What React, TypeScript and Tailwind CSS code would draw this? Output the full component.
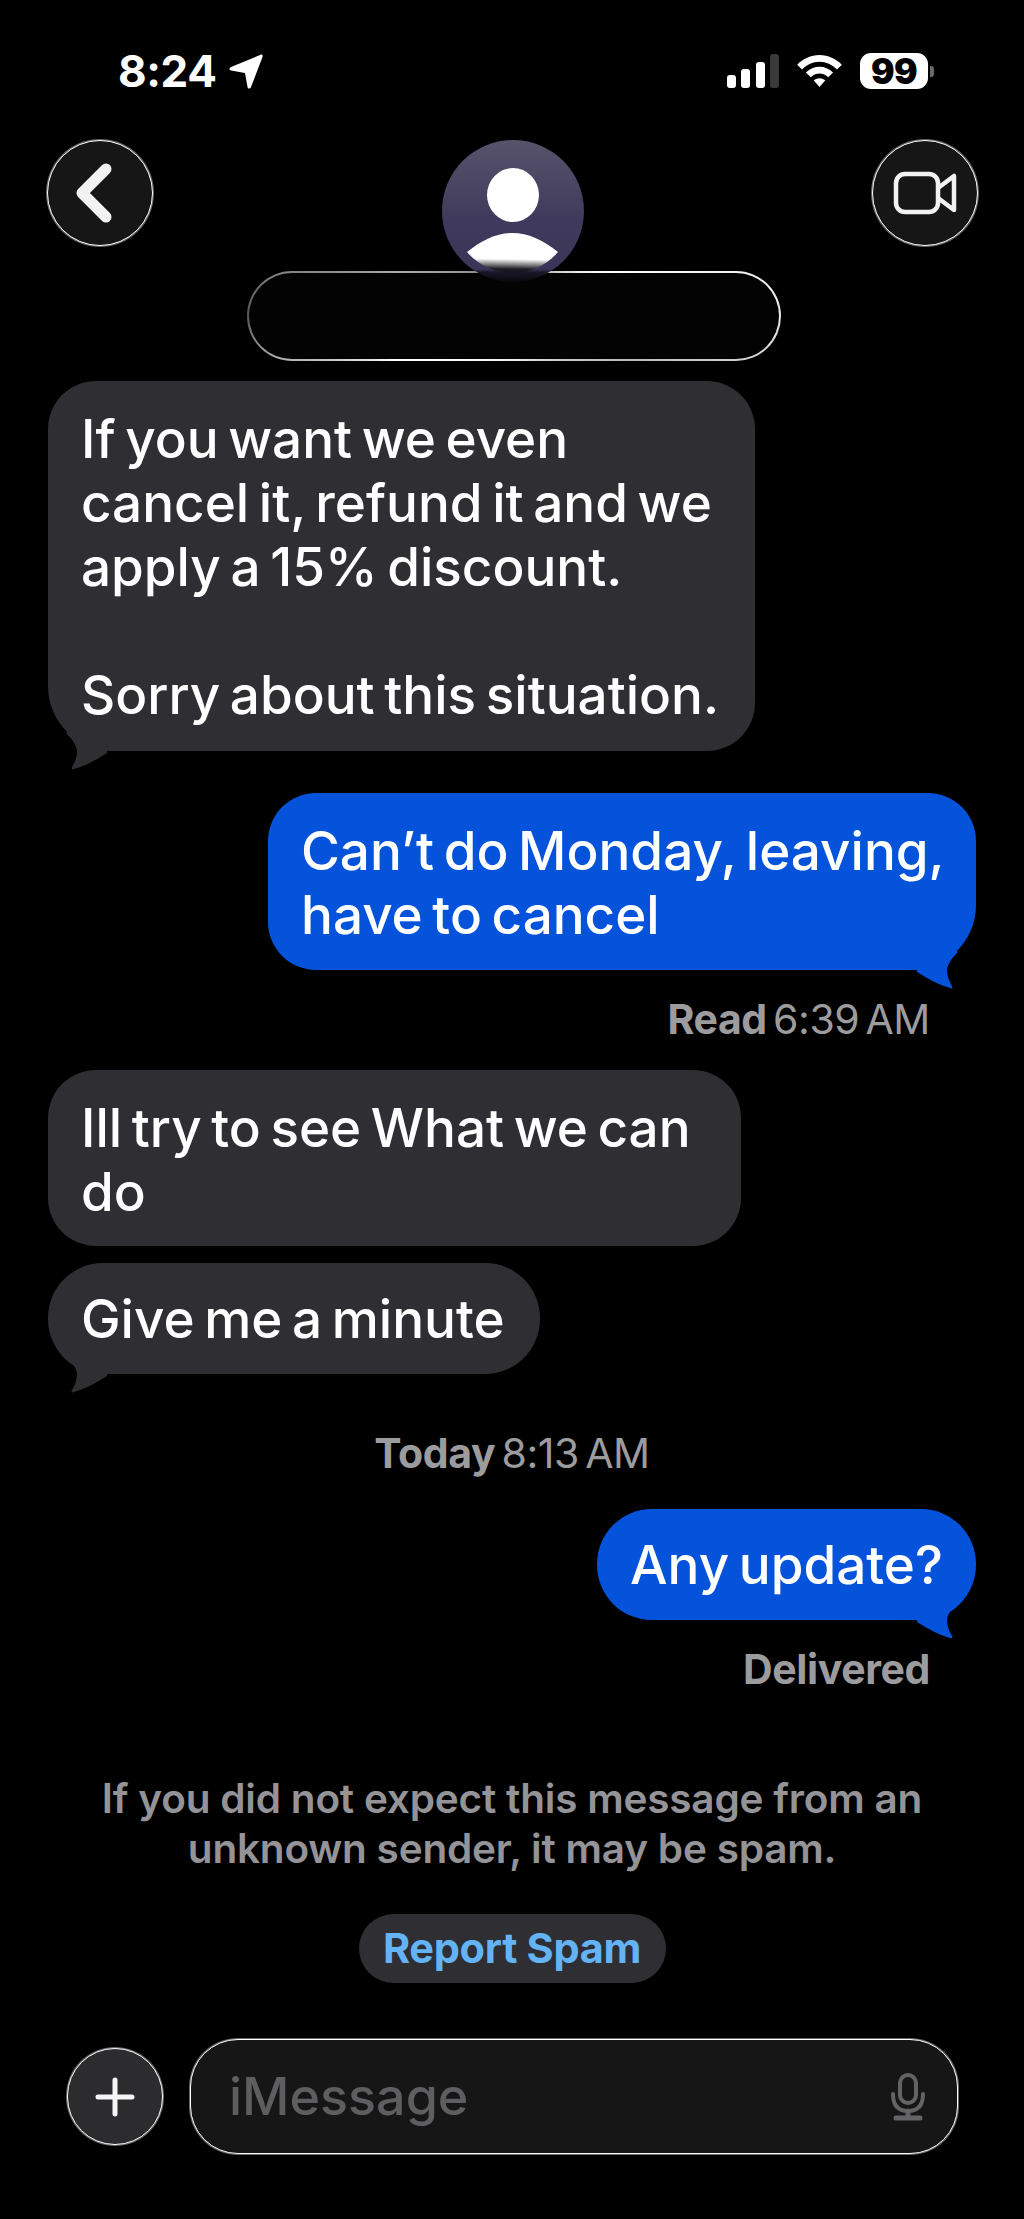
import React from "react";

const font = "[font-family:Inter,'Liberation_Sans',sans-serif]";

function Tail({ side }: { side: "l" | "r" }) {
  return (
    <svg
      className={`absolute bottom-[-20px] ${side === "l" ? "left-0" : "right-0 -scale-x-100"}`}
      width="80"
      height="64"
      viewBox="0 0 80 64"
      fill={side === "l" ? "#2f2f33" : "#0453da"}
    >
      <path d="M18 26 C22 30 29 38 29 44 C29 50 27 55 24 60 C23 62 24 63 26 62 C37 59 48 53 59 46 L59 44 L80 40 L40 10 Z" />
    </svg>
  );
}

function Bubble({ side, tail, className, children }: { side: "l" | "r"; tail?: boolean; className: string; children: React.ReactNode }) {
  return (
    <div className={`relative px-[33px] text-[53px] leading-[64px] font-medium text-white [word-spacing:-4.5px] ${side === "l" ? "bg-[#2f2f33]" : "bg-[#0453da]"} ${className}`}>
      {tail && <Tail side={side} />}
      <span className="relative whitespace-nowrap">{children}</span>
    </div>
  );
}

function Meta({ strong, rest }: { strong: string; rest?: string }) {
  return (
    <span className="text-[41px] leading-[44px] text-[#9c9c9f] tracking-[-0.4px] whitespace-nowrap">
      <span className="font-bold text-[41px]">{strong}</span>
      {rest && <span className="font-normal [word-spacing:-5px]"> {rest}</span>}
    </span>
  );
}

export default function App() {
  return (
    <div className={`w-[1024px] h-[2219px] bg-black overflow-hidden flex flex-col text-white ${font}`}>
      {/* Status bar */}
      <div className="flex items-center justify-between h-[46px] mt-[48px] pl-[118px] pr-[90px]">
        <div className="flex items-center gap-[12px]">
          <span className="text-[44px] leading-[46px] font-bold tracking-[-0.4px]">8:24</span>
          <svg width="34" height="35" viewBox="0 0 34 35" fill="white">
            <path d="M31 1 C33 0 34 1 33.5 3 L22 33 C21 35 19 35 18.500 33 L16 19 L2 16.500 C0 16 0 14 2 13 Z" />
          </svg>
        </div>
        <div className="flex items-center">
          <svg width="52" height="34" viewBox="0 0 52 34" className="mr-[18px]">
            <rect x="0" y="21" width="9" height="13" rx="3" fill="white" />
            <rect x="14" y="15" width="9" height="19" rx="3" fill="white" />
            <rect x="29" y="8" width="9" height="26" rx="3" fill="white" />
            <rect x="43" y="0" width="9" height="34" rx="3" fill="#3a3a3c" />
          </svg>
          <svg width="45" height="33" viewBox="0 0 46 34" fill="white" className="mr-[18px]">
            <path d="M23 0 C32 0 40 4 46 10 L41 15 C36 10 30 7 23 7 C16 7 10 10 5 15 L0 10 C6 4 14 0 23 0 Z" />
            <path d="M23 12 C28 12 33 14 37 18 L32 23 C29 20 26 19 23 19 C20 19 17 20 14 23 L9 18 C13 14 18 12 23 12 Z" />
            <path d="M23 24 C25 24 27 25 29 26 L23 33 L17 26 C19 25 21 24 23 24 Z" />
          </svg>
          <div className="w-[68px] h-[36px] rounded-[11px] bg-white flex items-center justify-center">
            <span className="text-[35px] leading-[36px] font-black text-black tracking-[-0.5px]">99</span>
          </div>
          <div className="w-[4px] h-[11px] ml-[2px] rounded-r-[3px] bg-[#6a6a6c]" />
        </div>
      </div>

      {/* Nav */}
      <div className="flex justify-between items-start mt-[46px] pl-[47px] pr-[46px] h-[141px]">
        <div className="w-[106px] h-[106px] rounded-full border border-white shadow-[0_0_0_1px_rgba(255,255,255,0.4)] bg-[#161616] flex items-center justify-center">
          <svg width="38" height="60" viewBox="0 0 38 60" fill="none" stroke="#f2f2f2" strokeWidth="11" strokeLinecap="round" strokeLinejoin="round" className="mr-[12px]">
            <path d="M31 6 L7 30 L31 54" />
          </svg>
        </div>
        <div className="relative z-10 w-[142px] h-[142px] rounded-full bg-[linear-gradient(to_bottom,#57536b_0%,#403b5c_55%,#3a3558_91%,#1a1828_93%,#08070c_100%)] flex items-center justify-center">
          <svg width="142" height="142" viewBox="0 0 142 142">
            <defs>
              <linearGradient id="body" x1="0.52" y1="0" x2="0.48" y2="1">
                <stop offset="0.65" stopColor="#ffffff" />
                <stop offset="0.78" stopColor="#8a8a8a" />
                <stop offset="0.9" stopColor="#1d1c24" />
                <stop offset="1" stopColor="#15141c" />
              </linearGradient>
            </defs>
            <ellipse cx="71" cy="55" rx="26" ry="27" fill="#ffffff" />
            <path d="M25 112 C40 100 55 93 70.500 93 C86 93 101 100 116 112 C105 125 88 133 70.500 133 C53 133 36 125 25 112 Z" fill="url(#body)" />
          </svg>
        </div>
        <div className="w-[106px] h-[106px] rounded-full border border-white shadow-[0_0_0_1px_rgba(255,255,255,0.4)] bg-[#161616] flex items-center justify-center">
          <svg width="64" height="44" viewBox="0 0 64 44" fill="none" stroke="#f2f2f2" strokeWidth="4.5" strokeLinejoin="round">
            <rect x="3" y="3" width="42" height="38" rx="9" />
            <path d="M45 17 L61 5 V39 L45 27" />
          </svg>
        </div>
      </div>

      {/* Name pill (redacted) */}
      <div className="self-center w-[534px] h-[90px] mt-[-10px] ml-[4px] rounded-[45px] border-2 border-transparent [background:linear-gradient(#030303,#030303)_padding-box,conic-gradient(#666_0deg,#fff_65deg,#e8e8e8_90deg,#bbb_110deg,#eee_180deg,#fff_250deg,#555_270deg,#aaa_290deg,#666_360deg)_border-box]" />

      {/* Conversation */}
      <div className="flex flex-col px-[48px] mt-[20px]">
        <Bubble side="l" tail className="self-start w-[707px] h-[370px] pt-[26px] rounded-[48px] rounded-bl-[65px]">
          If you want we even<br />cancel it, refund it and we<br />apply a 15% discount.<br /><br />Sorry about this situation.
        </Bubble>
        <Bubble side="r" tail className="self-end w-[708px] h-[177px] pt-[26px] mt-[42px] rounded-[48px] rounded-br-[65px]">
          Can’t do Monday, leaving,<br />have to cancel
        </Bubble>
        <div className="self-end mt-[27px] mr-[46px] flex h-[44px]">
          <Meta strong="Read" rest="6:39 AM" />
        </div>
        <Bubble side="l" className="self-start w-[693px] h-[176px] pt-[26px] mt-[29px] rounded-[48px]">
          Ill try to see What we can<br />do
        </Bubble>
        <Bubble side="l" tail className="self-start w-[492px] h-[111px] pt-[24px] mt-[17px] rounded-[55px]">
          Give me a minute
        </Bubble>
        <div className="self-center mt-[57px] h-[44px]">
          <Meta strong="Today" rest="8:13 AM" />
        </div>
        <Bubble side="r" tail className="self-end w-[379px] h-[111px] pt-[24px] mt-[34px] rounded-[55px]">
          Any update?
        </Bubble>
        <div className="self-end mt-[27px] mr-[46px] h-[44px]">
          <Meta strong="Delivered" />
        </div>
      </div>

      {/* Spam warning */}
      <div className="mt-[83px] text-center text-[40.5px] leading-[50px] font-semibold text-[#949498] tracking-[-0.2px]">
        If you did not expect this message from an<br />unknown sender, it may be spam.
      </div>
      <div className="self-center mt-[40px] w-[307px] h-[69px] rounded-[35px] bg-[#2f2f33] flex items-center justify-center text-[41.5px] font-bold text-[#63b3f5] tracking-[-0.3px]">
        Report Spam
      </div>

      {/* Input */}
      <div className="flex items-center mt-[56px] pl-[67px] pr-[66px]">
        <div className="w-[96px] h-[97px] rounded-full border border-white shadow-[0_0_0_1px_rgba(255,255,255,0.4)] bg-[#2c2c2e] flex items-center justify-center">
          <svg width="40" height="40" viewBox="0 0 40 40" stroke="#f5f5f5" strokeWidth="5" strokeLinecap="round">
            <path d="M20 3 V37 M3 20 H37" />
          </svg>
        </div>
        <div className="flex-1 ml-[27px] h-[115px] rounded-[48px] border border-white shadow-[0_0_0_1px_rgba(255,255,255,0.4)] bg-[#161616] flex items-center justify-between pl-[38px] pr-[31px]">
          <span className="text-[52px] leading-[64px] text-[#5e5e60] font-medium">iMessage</span>
          <svg width="36" height="48" viewBox="0 0 36 48" fill="none" stroke="#636365" strokeWidth="4" strokeLinecap="round">
            <rect x="10" y="2" width="16" height="28" rx="8" />
            <path d="M3 21 C3 32 8 38 18 38 C28 38 33 32 33 21" />
            <path d="M18 38 V44 M6 45 H30" strokeWidth="5" />
          </svg>
        </div>
      </div>
    </div>
  );
}
